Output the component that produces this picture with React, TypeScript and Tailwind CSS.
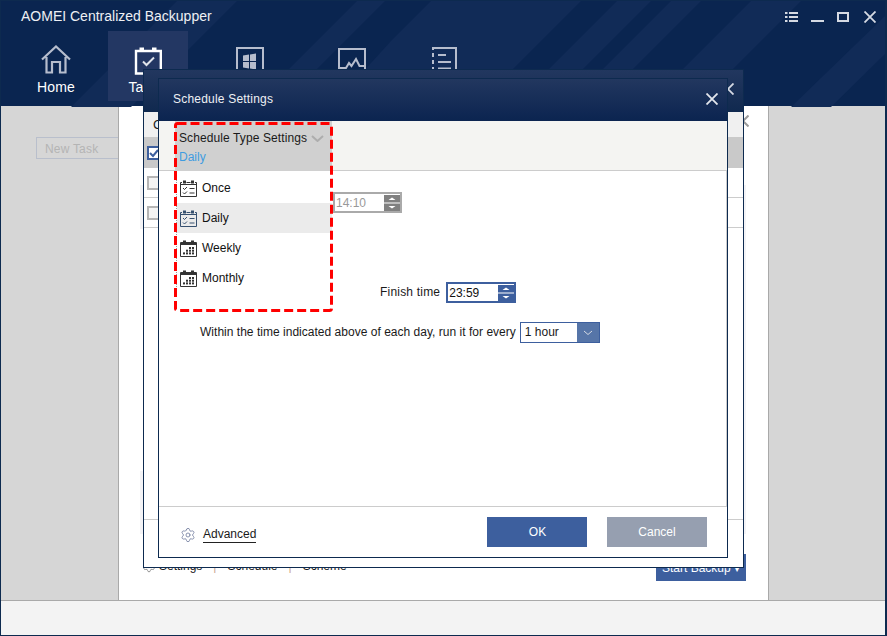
import { Settings } from "lucide-react";

const stripes = [
  "M70 106 L176 0 L236 0 L130 106 Z",
  "M250 106 L356 0 L384 0 L278 106 Z",
  "M390 40 L430 0 L580 0 L474 106 L330 106 Z",
  "M510 106 L616 0 L650 0 L544 106 Z",
  "M600 70 L670 0 L700 0 L630 70 Z",
  "M680 70 L750 0 L800 0 L730 70 Z",
  "M790 106 L887 12 L887 50 L830 106 Z",
];

function HeaderPattern() {
  return (
    <svg className="absolute inset-0" width="887" height="106" viewBox="0 0 887 106" fill="none">
      {stripes.map((d) => (
        <path key={d} d={d} fill="#112b57" />
      ))}
    </svg>
  );
}

function HomeIcon() {
  return (
    <svg width="30" height="29" viewBox="0 0 30 29" fill="none" stroke="#b6bdcd" strokeWidth="2.2">
      <path d="M1 14.5 L15 1.5 L29 14.5 M5.5 12 V27.5 H11 V17 H19 V27.5 H24.5 V12" />
    </svg>
  );
}

function TaskIcon() {
  return (
    <svg width="28" height="28" viewBox="0 0 28 28" fill="none" stroke="#ffffff" strokeWidth="2.4">
      <path d="M2 4 H5 M11 4 H17 M23 4 H26.8 V26.5 H2 V4 Z" />
      <path d="M5.5 0.5 H10 V3 H5.5 Z M18 0.5 H22.5 V3 H18 Z" fill="#ffffff" stroke="none" />
      <path d="M9 14.5 L12.5 18 L20 10.5" stroke="#dfe3ea" strokeWidth="2" />
    </svg>
  );
}

function WinIcon() {
  return (
    <svg width="28" height="28" viewBox="0 0 28 28" fill="none">
      <path d="M1 28 V1 H27 V28" stroke="#b6bdcd" strokeWidth="2" />
      <path d="M7 8.5 L13 7.5 V14 H7 Z M14 7.4 L20 6.4 V14 H14 Z M7 15 H13 V21.5 L7 20.5 Z M14 15 H20 V22.5 L14 21.6 Z" fill="#b6bdcd" />
    </svg>
  );
}

function ActivityIcon() {
  return (
    <svg width="28" height="28" viewBox="0 0 28 28" fill="none" stroke="#b6bdcd" strokeWidth="2">
      <path d="M1 28 V1 H27 V28" />
      <path d="M1 20 H8 L11 15 L13.5 18 L18 11 L21.5 18 H27" />
    </svg>
  );
}

function ListIcon() {
  return (
    <svg width="25" height="28" viewBox="0 0 25 28" fill="none" stroke="#b6bdcd" strokeWidth="2">
      <path d="M1 3 V1 H24 V28 M1 6 V10 M1 13 V17 M1 20 V24" />
      <path d="M6 8 H14 M6 15 H19 M6 21.5 H19" />
    </svg>
  );
}

function CheckListIcon({ color }: { color: string }) {
  return (
    <svg width="17" height="17" viewBox="0 0 17 17" fill="none" stroke={color} strokeWidth="1">
      <path d="M0.5 2.5 H2 M6.5 2.5 H10.5 M15 2.5 H16.5 V16.5 H0.5 V2.5 M0.5 4.5 H16.5" />
      <path d="M3 0.5 H6 V3.5 H3 Z M11 0.5 H14 V3.5 H11 Z" fill={color} stroke="none" />
      <path d="M3 8 L4.5 9.5 L7 7 M3 12.5 L4.5 14 L7 11.5 M9.5 8.5 H14.5 M9.5 13 H14.5" />
    </svg>
  );
}

function CalendarIcon() {
  const cells = [
    [9, 7], [12, 7],
    [6, 9.7], [9, 9.7], [12, 9.7],
    [3, 12.4], [6, 12.4], [9, 12.4], [12, 12.4],
  ];
  return (
    <svg width="17" height="17" viewBox="0 0 17 17" fill="none" stroke="#333333" strokeWidth="1">
      <path d="M0.5 2.5 H16.5 V16.5 H0.5 Z" />
      <path d="M1 3 H16 V5 H1 Z" fill="#333333" stroke="none" />
      <path d="M3 0.5 H6 V3.5 H3 Z M11 0.5 H14 V3.5 H11 Z" fill="#333333" stroke="none" />
      {cells.map(([x, y]) => (
        <rect key={`${x}-${y}`} x={x} y={y} width="2" height="2" fill="#333333" stroke="none" />
      ))}
    </svg>
  );
}

function Spinner({ color }: { color: string }) {
  return (
    <svg width="16" height="16" viewBox="0 0 16 16">
      <rect x="0" y="0" width="16" height="7.5" fill={color} />
      <rect x="0" y="8.5" width="16" height="7.5" fill={color} />
      <path d="M4.5 5 L8 2.5 L11.5 5 Z M4.5 11 L11.5 11 L8 13.5 Z" fill="#ffffff" />
    </svg>
  );
}

function CloseX({ color, size, weight }: { color: string; size: number; weight: number }) {
  return (
    <svg width={size} height={size} viewBox="0 0 12 12" fill="none" stroke={color} strokeWidth={weight}>
      <path d="M0.5 0.5 L11.5 11.5 M11.5 0.5 L0.5 11.5" />
    </svg>
  );
}

function Box({ checked }: { checked?: boolean }) {
  return (
    <div className={`flex h-[14px] w-[14px] items-center justify-center border-2 ${checked ? "border-[#3d5f9e] bg-white" : "border-[#b5b5b5] bg-[#f4f4f4]"}`}>
      {checked && (
        <svg width="10" height="10" viewBox="0 0 10 10" fill="none" stroke="#3d5f9e" strokeWidth="2">
          <path d="M1 5 L4 8 L9 2" />
        </svg>
      )}
    </div>
  );
}

const menu = [
  { label: "Once", icon: <CheckListIcon color="#333333" />, active: false },
  { label: "Daily", icon: <CheckListIcon color="#36506f" />, active: true },
  { label: "Weekly", icon: <CalendarIcon />, active: false },
  { label: "Monthly", icon: <CalendarIcon />, active: false },
];

export default function App() {
  return (
    <div className="relative flex h-[636px] w-[887px] flex-col overflow-hidden border-t border-r-2 border-b border-l border-[#0d2a4f] bg-white text-[12px] text-[#1a1a1a] [font-family:'Liberation_Sans',sans-serif]">
      <header className="relative h-[105px] shrink-0 bg-[#0a2550]">
        <HeaderPattern />
        <div className="relative flex h-full flex-col">
          <div className="flex h-[30px] items-center justify-between pr-[9px] pl-[20px] pt-[1px]">
            <span className="text-[14px] text-[#eef0f4]">AOMEI Centralized Backupper</span>
            <div className="flex items-center">
              <svg width="13" height="10" viewBox="0 0 13 10" fill="#d5dae3">
                <path d="M0 0 H2.5 V2 H0 Z M4 0 H13 V2 H4 Z M0 4 H2.5 V6 H0 Z M4 4 H13 V6 H4 Z M0 8 H2.5 V10 H0 Z M4 8 H13 V10 H4 Z" />
              </svg>
              <svg className="ml-[13px]" width="13" height="10" viewBox="0 0 13 10" fill="#d5dae3">
                <path d="M0 8 H13 V10 H0 Z" />
              </svg>
              <svg className="ml-[13px]" width="12" height="10" viewBox="0 0 12 10" fill="none" stroke="#d5dae3" strokeWidth="2">
                <path d="M1 1 H11 V9 H1 Z" />
              </svg>
              <div className="ml-[15px]">
                <CloseX color="#d5dae3" size={12} weight={1.8} />
              </div>
            </div>
          </div>
          <nav className="flex h-[70px] pl-[15px]">
            <div className="flex w-[80px] flex-col items-center pt-[14px]">
              <HomeIcon />
              <span className="mt-[3px] text-[14px] tracking-[0.2px] text-white">Home</span>
            </div>
            <div className="ml-[12px] flex w-[80px] flex-col items-center bg-[#233763] pt-[16px]">
              <TaskIcon />
              <span className="mt-[2px] pr-[3px] text-[14px] text-white">Tasks</span>
            </div>
            <div className="ml-[48px] pt-[16px]">
              <WinIcon />
            </div>
            <div className="ml-[74px] pt-[17px]">
              <ActivityIcon />
            </div>
            <div className="ml-[66px] pt-[16px]">
              <ListIcon />
            </div>
          </nav>
        </div>
      </header>

      <main className="flex min-h-0 flex-1">
        <aside className="w-[117px] shrink-0 bg-[#d6d6d6] pt-[31px] pl-[35px]">
          <div className="flex h-[22px] w-[82px] items-center border border-r-0 border-[#b9bfcc] pt-[1px] pl-[8px] tracking-[0.2px] text-[#b4b4b4]">New Task</div>
        </aside>
        <section className="flex flex-1 items-end justify-between border-l border-r border-[#a9a9a9] bg-white pr-[22px] pb-[19px] pl-[23px]">
          <div className="mb-[6px] flex items-center">
            <Settings size={14} strokeWidth={1} color="#555" />
            <span className="ml-[3px]">Settings</span>
            <span className="ml-[11px] text-[#c9a48f]">|</span>
            <span className="ml-[11px]">Schedule</span>
            <span className="ml-[11px] text-[#c9a48f]">|</span>
            <span className="ml-[11px]">Scheme</span>
          </div>
          <div className="flex h-[27px] w-[90px] items-center justify-center bg-[#3d5f9e] text-white">Start Backup ▾</div>
        </section>
        <aside className="w-[116px] shrink-0 bg-[#d6d6d6]" />
      </main>

      <footer className="h-[35px] shrink-0 border-t border-[#a9a9a9] bg-[#f3f3f3]" />

      {/* Edges of the table that lies under the dialogs */}
      <div className="absolute top-[184px] left-[139px] h-[44px] w-[10px] bg-[#f3f3f6]" />
      <div className="absolute top-[470px] left-[139px] h-[63px] w-[10px] bg-[#f3f3f6]" />
      <div className="absolute top-[184px] left-[730px] h-[349px] w-[15px] bg-[#f3f3f6]" />

      {/* Close button of the window under the dialogs */}
      <div className="absolute top-[114px] left-[736px]">
        <CloseX color="#9a9a9a" size={12} weight={2} />
      </div>

      {/* Dialog behind */}
      <div className="absolute top-[68px] left-[142px] flex h-[499px] w-[601px] flex-col border border-[#0d2a4f] bg-white">
        <div className="relative h-[42px] shrink-0 bg-gradient-to-b from-[#22375f] to-[#10294f]">
          <div className="absolute top-[13px] right-[9px]">
            <CloseX color="#d5dae3" size={12} weight={1.8} />
          </div>
        </div>
        <div className="flex h-[25px] shrink-0 items-center bg-[#f0f0f0] pl-[9px] text-[13px]">C</div>
        <div className="flex h-[31px] shrink-0 items-center bg-[#c9c9c9] pl-[3px]">
          <Box checked />
        </div>
        <div className="flex h-[30px] shrink-0 items-center border-b border-[#cccccc] pl-[3px]">
          <Box />
        </div>
        <div className="flex h-[30px] shrink-0 items-center border-b border-[#cccccc] pl-[3px]">
          <Box />
        </div>
        <div className="mt-auto h-[48px] shrink-0 border-t border-[#cccccc]" />
      </div>

      {/* Schedule Settings dialog */}
      <div className="absolute top-[77px] left-[157px] flex h-[480px] w-[570px] flex-col border border-[#0d2a4f] bg-white">
        <div className="flex h-[42px] shrink-0 items-center justify-between bg-gradient-to-b from-[#22375f] to-[#0b2450] pr-[9px] pb-[3px] pl-[14px]">
          <span className="text-[12px] tracking-[0.2px] text-[#eef0f4]">Schedule Settings</span>
          <CloseX color="#e3e6ec" size={12} weight={1.8} />
        </div>
        <div className="h-[50px] shrink-0 border-b border-[#cccccc] bg-[#f4f4f2]" />
        <div className="min-h-0 flex-1 border-r border-[#cccccc]">
          <div className="mt-[21px] ml-[174px] flex h-[21px] w-[69px] items-center justify-between border-2 border-[#aaaaaa] pl-[1px] text-[#999999]">
            <span>14:10</span>
            <Spinner color="#808080" />
          </div>
          <div className="mt-[69px] ml-[221px] flex items-center">
            <span className="pb-[2px] tracking-[0.2px]">Finish time</span>
            <div className="ml-[6px] flex h-[21px] w-[70px] items-center justify-between border-2 border-[#3d5f9e] pl-[1px] text-[#111]">
              <span>23:59</span>
              <Spinner color="#3d5f9e" />
            </div>
          </div>
          <div className="mt-[19px] ml-[41px] flex items-center">
            <span className="pb-[2px] tracking-[0.02px]">Within the time indicated above of each day, run it for every</span>
            <div className="ml-[4px] flex h-[21px] w-[80px] items-center justify-between border border-[#3d5f9e]">
              <span className="pb-[2px] pl-[4px]">1 hour</span>
              <div className="flex h-full w-[22px] items-center justify-center bg-[#5675a8]">
                <svg width="10" height="6" viewBox="0 0 10 6" fill="none" stroke="#d5dae3" strokeWidth="1">
                  <path d="M1 1 L5 4.5 L9 1" />
                </svg>
              </div>
            </div>
          </div>
        </div>
        <div className="flex h-[51px] shrink-0 items-center justify-between border-t border-[#cccccc] pr-[20px] pl-[21px]">
          <div className="flex items-center pt-[6px]">
            <Settings size={16} strokeWidth={1.2} color="#6f7a9c" />
            <span className="ml-[7px] border-b border-[#222] leading-[15px]">Advanced</span>
          </div>
          <div className="flex gap-[20px] pb-[1px]">
            <div className="flex h-[30px] w-[100px] items-center justify-center bg-[#3d5f9e] pl-[1px] text-white">OK</div>
            <div className="flex h-[30px] w-[100px] items-center justify-center bg-[#969fb0] text-white">Cancel</div>
          </div>
        </div>
      </div>

      {/* Schedule type dropdown */}
      <div className="absolute top-[120px] left-[174px] flex h-[190px] w-[157px] flex-col bg-white">
        <div className="h-[50px] shrink-0 bg-[#d0d0d0] pt-[8px] pl-[4px]">
          <div className="flex items-center">
            <span className="tracking-[0.1px]">Schedule Type Settings</span>
            <svg className="ml-[4px]" width="13" height="7" viewBox="0 0 13 7" fill="none" stroke="#adadad" strokeWidth="2">
              <path d="M1 1 L6.5 6 L12 1" />
            </svg>
          </div>
          <div className="mt-[1px] text-[#3f9ce0]">Daily</div>
        </div>
        <div className="mt-[2px] ml-[1px] flex flex-col border-l border-dotted border-[#999999]">
          {menu.map((m) => (
            <div key={m.label} className={`flex h-[30px] items-center pl-[3px] ${m.active ? "bg-[#ebebeb]" : ""}`}>
              {m.icon}
              <span className="ml-[5px] text-[#111]">{m.label}</span>
            </div>
          ))}
        </div>
      </div>

      {/* Red dashed annotation */}
      <svg className="absolute top-[119px] left-[171px]" width="163" height="194" viewBox="0 0 163 194" fill="none">
        <rect x="3.5" y="3.5" width="156" height="187" rx="2" stroke="#ff0000" strokeWidth="3" strokeDasharray="9 4" />
      </svg>
    </div>
  );
}
